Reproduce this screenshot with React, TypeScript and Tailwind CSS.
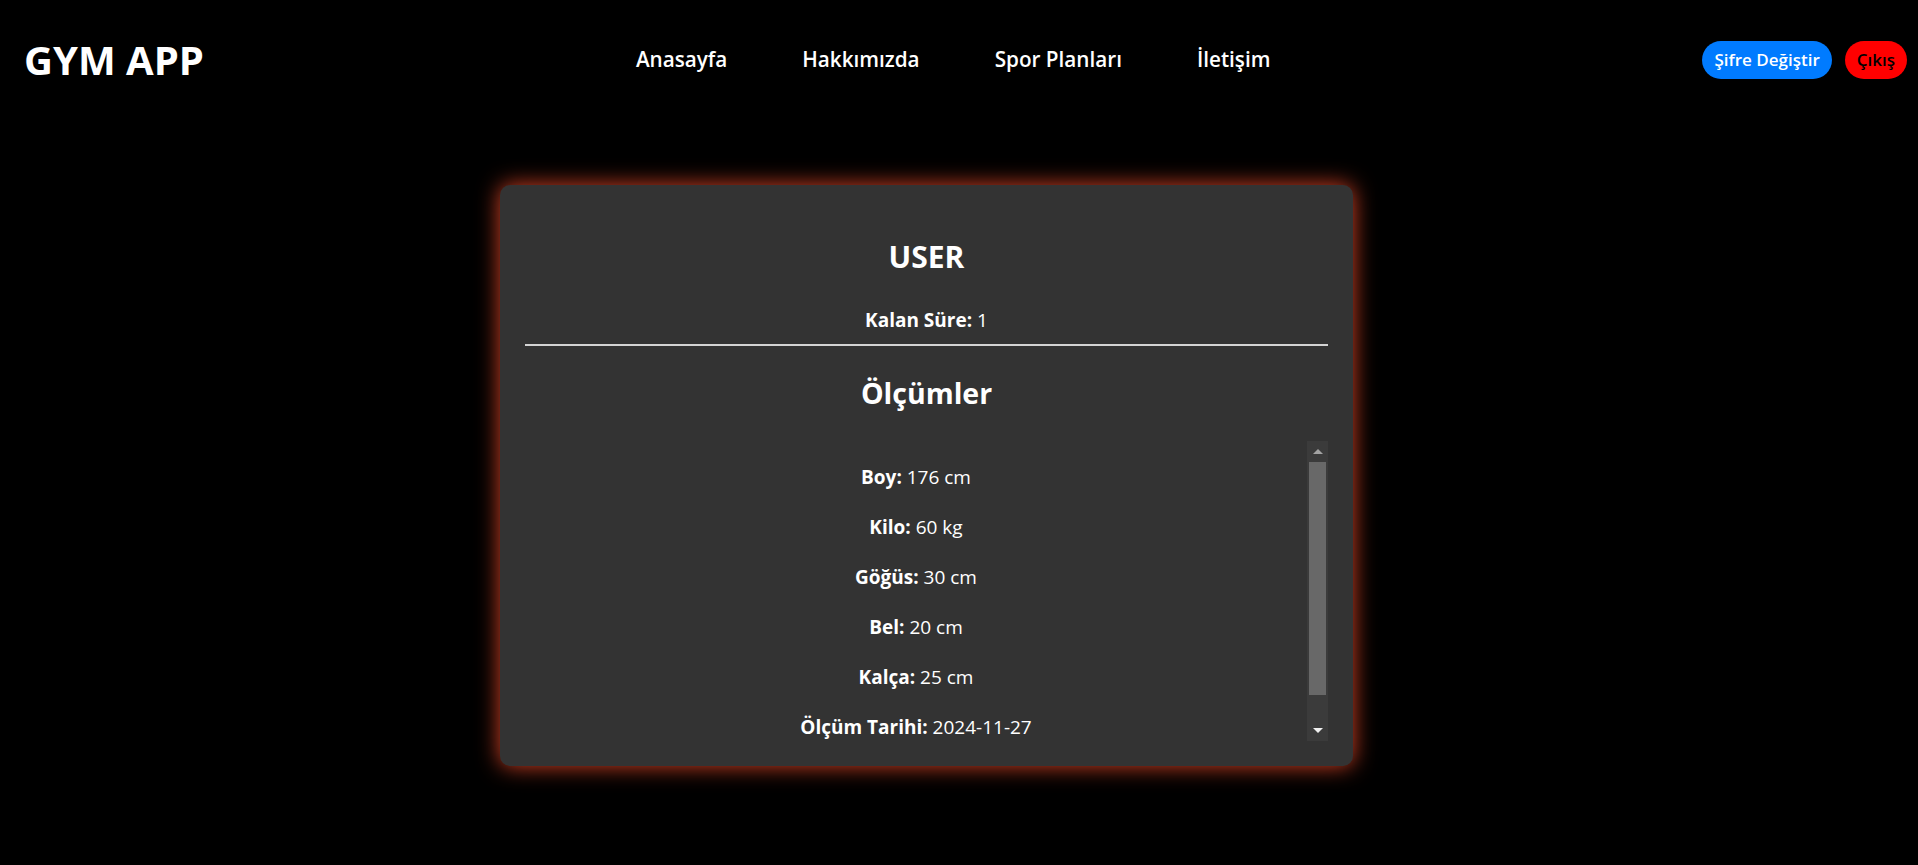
const navLinks = ["Anasayfa", "Hakkımızda", "Spor Planları", "İletişim"];

const measurements = [
  { label: "Boy", value: "176 cm" },
  { label: "Kilo", value: "60 kg" },
  { label: "Göğüs", value: "30 cm" },
  { label: "Bel", value: "20 cm" },
  { label: "Kalça", value: "25 cm" },
  { label: "Ölçüm Tarihi", value: "2024-11-27" },
];

function Header() {
  return (
    <header className="h-[120px] flex items-center pl-[24px] pr-[11px]">
      {/* Logo */}
      <h1 className="text-[40px] leading-none font-bold text-white whitespace-nowrap">GYM APP</h1>

      {/* Nav links */}
      <nav className="flex-1 flex justify-center items-center gap-[75px]">
        {navLinks.map((link) => (
          <a key={link} href="#" className="text-[20.7px] font-semibold text-white whitespace-nowrap">
            {link}
          </a>
        ))}
      </nav>

      {/* Right buttons */}
      <div className="flex items-center gap-[13px]">
        <button
          type="button"
          className="h-[38px] px-[12px] rounded-full bg-[#007bff] text-white text-[17px] font-semibold whitespace-nowrap"
        >
          Şifre Değiştir
        </button>
        <button
          type="button"
          className="h-[38px] px-[12px] rounded-full bg-[#ff0000] text-black text-[17px] font-semibold whitespace-nowrap"
        >
          Çıkış
        </button>
      </div>
    </header>
  );
}

function FakeScrollbar() {
  return (
    <div className="w-[21px] h-full bg-[#3b3b3b] flex flex-col shrink-0">
      <div className="h-[21px] flex items-center justify-center">
        <div className="w-0 h-0 border-l-[5px] border-r-[5px] border-b-[5px] border-l-transparent border-r-transparent border-b-[#a3a3a3]" />
      </div>
      <div className="h-[233px] mx-[2px] bg-[#686868]" />
      <div className="flex-1" />
      <div className="h-[21px] flex items-center justify-center">
        <div className="w-0 h-0 border-l-[5px] border-r-[5px] border-t-[5px] border-l-transparent border-r-transparent border-t-[#f0f0f0]" />
      </div>
    </div>
  );
}

function ProfileCard() {
  return (
    <div className="w-[853px] ml-[500px] mt-[65px] bg-[#333333] rounded-[10px] px-[25px] pb-[25px] pt-[54px] shadow-[0_0_22px_rgba(255,80,45,0.85)]">
      <h2 className="text-[30px] leading-[36px] font-bold text-white text-center">USER</h2>
      <p className="mt-[32px] text-[19px] leading-[26px] text-white text-center">
        <span className="font-bold">Kalan Süre:</span> 1
      </p>

      <div className="mt-[11px] h-[2px] bg-[#d4d4d4]" />

      <h2 className="mt-[29px] text-[28.5px] leading-[36px] font-bold text-white text-center">Ölçümler</h2>

      {/* Measurements list */}
      <div className="mt-[30px] h-[300px] flex">
        <div className="flex-1 overflow-hidden pt-[23px] flex flex-col gap-[24px]">
          {measurements.map((m) => (
            <p key={m.label} className="text-[19px] leading-[26px] text-white text-center whitespace-nowrap">
              <span className="font-bold">{m.label}:</span> {m.value}
            </p>
          ))}
        </div>
        <FakeScrollbar />
      </div>
    </div>
  );
}

export default function App() {
  return (
    <div className="min-h-[865px] bg-black font-['Open_Sans',sans-serif] overflow-hidden">
      <Header />
      <ProfileCard />
    </div>
  );
}
